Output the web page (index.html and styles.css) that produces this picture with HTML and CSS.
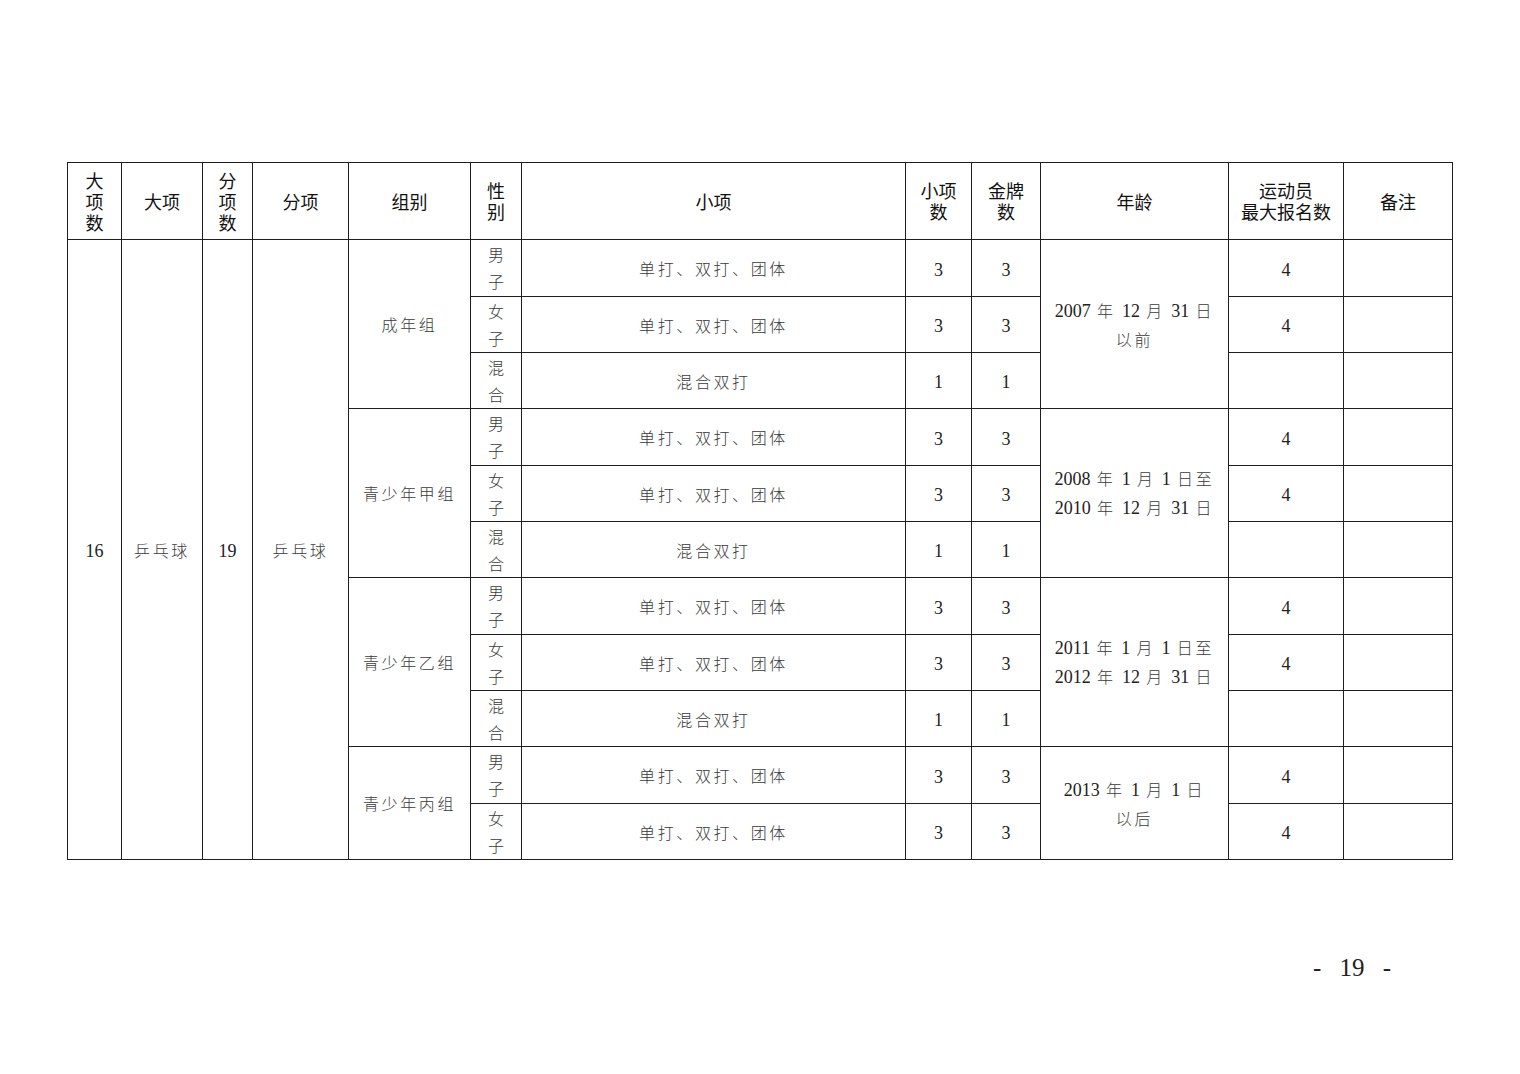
FILE: index.html
```
<!DOCTYPE html>
<html lang="zh-CN">
<head>
<meta charset="utf-8">
<link rel="stylesheet" href="styles.css">
</head>
<body>
<div class="page">
<table class="sheet">
<colgroup>
<col class="c1"><col class="c2"><col class="c3"><col class="c4"><col class="c5"><col class="c6"><col class="c7"><col class="c8"><col class="c9"><col class="c10"><col class="c11"><col class="c12">
</colgroup>
<thead>
<tr class="hrow">
<th>大<br>项<br>数</th><th>大项</th><th>分<br>项<br>数</th><th>分项</th><th>组别</th><th>性<br>别</th><th>小项</th><th>小项<br>数</th><th>金牌<br>数</th><th>年龄</th><th>运动员<br>最大报名数</th><th>备注</th>
</tr>
</thead>
<tbody>
<tr class="r57">
<td rowspan="11" class="num">16</td><td rowspan="11" class="cn">乒乓球</td><td rowspan="11" class="num">19</td><td rowspan="11" class="cn">乒乓球</td>
<td rowspan="3" class="cn">成年组</td><td class="sex">男<br>子</td><td class="cn">单打、双打、团体</td><td class="num">3</td><td class="num">3</td>
<td rowspan="3" class="age"><span class="n">2007</span> 年 <span class="n">12</span> 月 <span class="n">31</span> 日<br>以前</td><td class="num">4</td><td></td>
</tr>
<tr class="r56"><td class="sex">女<br>子</td><td class="cn">单打、双打、团体</td><td class="num">3</td><td class="num">3</td><td class="num">4</td><td></td></tr>
<tr class="r56"><td class="sex">混<br>合</td><td class="cn">混合双打</td><td class="num">1</td><td class="num">1</td><td></td><td></td></tr>
<tr class="r57">
<td rowspan="3" class="cn">青少年甲组</td><td class="sex">男<br>子</td><td class="cn">单打、双打、团体</td><td class="num">3</td><td class="num">3</td>
<td rowspan="3" class="age"><span class="n">2008</span> 年 <span class="n">1</span> 月 <span class="n">1</span> 日至<br><span class="n">2010</span> 年 <span class="n">12</span> 月 <span class="n">31</span> 日</td><td class="num">4</td><td></td>
</tr>
<tr class="r56"><td class="sex">女<br>子</td><td class="cn">单打、双打、团体</td><td class="num">3</td><td class="num">3</td><td class="num">4</td><td></td></tr>
<tr class="r56"><td class="sex">混<br>合</td><td class="cn">混合双打</td><td class="num">1</td><td class="num">1</td><td></td><td></td></tr>
<tr class="r57">
<td rowspan="3" class="cn">青少年乙组</td><td class="sex">男<br>子</td><td class="cn">单打、双打、团体</td><td class="num">3</td><td class="num">3</td>
<td rowspan="3" class="age"><span class="n">2011</span> 年 <span class="n">1</span> 月 <span class="n">1</span> 日至<br><span class="n">2012</span> 年 <span class="n">12</span> 月 <span class="n">31</span> 日</td><td class="num">4</td><td></td>
</tr>
<tr class="r56"><td class="sex">女<br>子</td><td class="cn">单打、双打、团体</td><td class="num">3</td><td class="num">3</td><td class="num">4</td><td></td></tr>
<tr class="r56"><td class="sex">混<br>合</td><td class="cn">混合双打</td><td class="num">1</td><td class="num">1</td><td></td><td></td></tr>
<tr class="r57">
<td rowspan="2" class="cn">青少年丙组</td><td class="sex">男<br>子</td><td class="cn">单打、双打、团体</td><td class="num">3</td><td class="num">3</td>
<td rowspan="2" class="age"><span class="n">2013</span> 年 <span class="n">1</span> 月 <span class="n">1</span> 日<br>以后</td><td class="num">4</td><td></td>
</tr>
<tr class="r56"><td class="sex">女<br>子</td><td class="cn">单打、双打、团体</td><td class="num">3</td><td class="num">3</td><td class="num">4</td><td></td></tr>
</tbody>
</table>
<div class="folio">- 19 -</div>
</div>
</body>
</html>
```
FILE: styles.css
```
html, body {
  margin: 0;
  padding: 0;
  background: #fff;
}
.page {
  width: 1520px;
  height: 1074px;
  padding-top: 162px;
  box-sizing: border-box;
  position: relative;
}
.sheet {
  margin-left: 67px;
  border-collapse: collapse;
  table-layout: fixed;
  width: 1385px;
  color: #222;
}
.c1 { width: 54px; }
.c2 { width: 81px; }
.c3 { width: 50px; }
.c4 { width: 96px; }
.c5 { width: 122px; }
.c6 { width: 51px; }
.c7 { width: 384px; }
.c8 { width: 66px; }
.c9 { width: 69px; }
.c10 { width: 188px; }
.c11 { width: 115px; }
.c12 { width: 109px; }
.sheet th, .sheet td {
  border: 1px solid #1e1e1e;
  padding: 0;
  text-align: center;
  vertical-align: middle;
}
.sheet th {
  font-family: "Noto Sans CJK SC", "Noto Sans", sans-serif;
  font-weight: 400;
  font-size: 18px;
  line-height: 21px;
  color: #111;
}
.hrow { height: 77px; }
.r57 { height: 57px; }
.r56 { height: 56px; }
.cn {
  font-family: "Noto Sans CJK SC", sans-serif;
  font-weight: 300;
  font-size: 16px;
  letter-spacing: 2.6px;
  color: #3a3a3a;
  padding-left: 2px;
}
.sex {
  font-family: "Noto Sans CJK SC", sans-serif;
  font-weight: 300;
  font-size: 16px;
  line-height: 27px;
  color: #3a3a3a;
  padding-top: 2px;
}
.sheet .num {
  font-family: "Liberation Serif", serif;
  font-size: 18px;
  color: #222;
  padding-top: 4px;
}
.age {
  font-family: "Noto Sans CJK SC", sans-serif;
  font-weight: 300;
  font-size: 16px;
  line-height: 28px;
  letter-spacing: 2.7px;
  word-spacing: 0;
  color: #3a3a3a;
  padding-left: 3px;
}
.age .n {
  font-family: "Liberation Serif", serif;
  font-size: 18px;
  letter-spacing: 0;
  color: #222;
}
.folio {
  position: absolute;
  left: 1313px;
  top: 954px;
  font-family: "Liberation Serif", serif;
  font-size: 25px;
  color: #222;
  word-spacing: 12px;
  white-space: pre;
}
```
